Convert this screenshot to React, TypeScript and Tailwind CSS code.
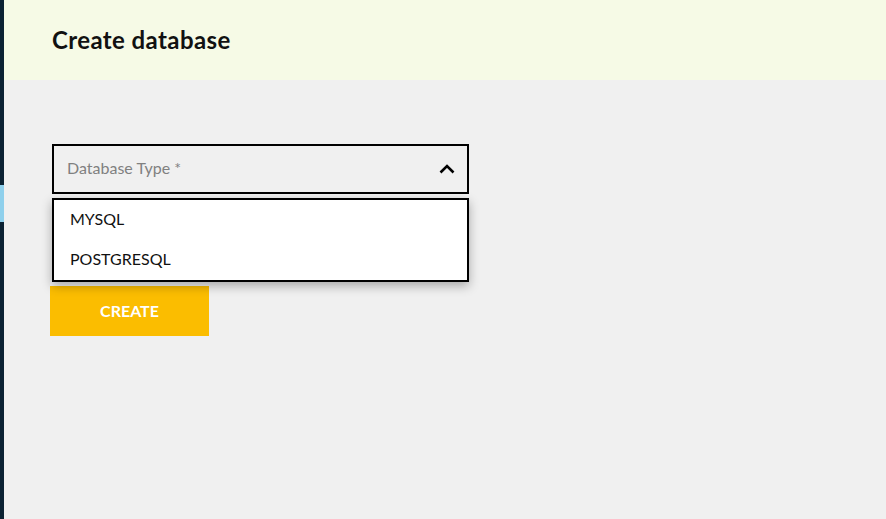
import { useState } from "react";

export default function App() {
  const [open, setOpen] = useState(true);

  return (
    <main
      className="flex min-h-[519px] w-full bg-[#f0f0f0]"
      style={{ fontFamily: "Lato, 'Open Sans', sans-serif" }}
    >
      <aside className="flex w-[4px] shrink-0 flex-col bg-[#0b2233]">
        <div className="h-[185px]" />
        <div className="h-[37px] bg-[#8fd0ec]" />
      </aside>

      <div className="flex flex-1 flex-col">
        <header className="flex h-[80px] items-center bg-[#f6fae6] pl-[48px]">
          <h1 className="text-[24px] font-bold tracking-[0.4px] text-[#111]">Create database</h1>
        </header>

        <section className="pl-[48px] pt-[64px]">
          <div className="relative w-[417px]">
            <button
              onClick={() => setOpen(!open)}
              className="flex h-[50px] w-full items-center justify-between border-2 border-black pb-[2px] pl-[13px] pr-[12px] text-left"
            >
              <span className="text-[16px] text-[#808080]">Database Type *</span>
              <svg width="16" height="16" viewBox="0 0 16 16">
                <path
                  d={open ? "M1.5 12.5 L8 6 L14.5 12.5" : "M1.5 5 L8 11.5 L14.5 5"}
                  fill="none"
                  stroke="#000"
                  strokeWidth="2.6"
                />
              </svg>
            </button>

            {open && (
              <ul className="absolute left-0 top-[54px] z-10 w-full border-2 border-black bg-white shadow-[0_4px_10px_rgba(0,0,0,0.3)]">
                <li className="flex h-[40px] items-center px-[16px] pb-[2px] text-[16px] text-[#111]">MYSQL</li>
                <li className="flex h-[40px] items-center px-[16px] pb-[2px] text-[16px] text-[#111]">POSTGRESQL</li>
              </ul>
            )}
          </div>

          <button className="ml-[-2px] mt-[92px] h-[50px] w-[159px] bg-[#fbbd00] text-[16px] font-bold text-white">
            CREATE
          </button>
        </section>
      </div>
    </main>
  );
}
